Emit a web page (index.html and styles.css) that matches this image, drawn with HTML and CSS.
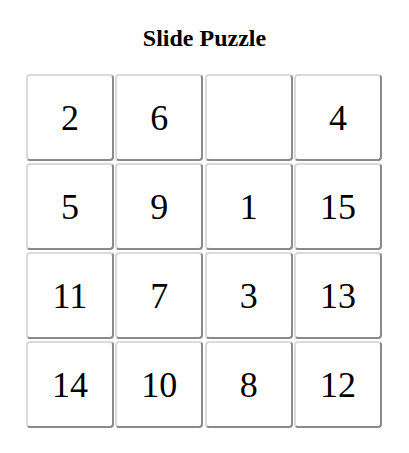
FILE: index.html
```html
<!DOCTYPE html>
<html>
<head>
<meta charset="utf-8">
<title>Slide Puzzle</title>
<link rel="stylesheet" href="styles.css">
</head>
<body>
<h2 class="title">Slide Puzzle</h2>
<div class="board">
  <div class="tile">2</div>
  <div class="tile">6</div>
  <div class="tile empty"></div>
  <div class="tile">4</div>
  <div class="tile">5</div>
  <div class="tile">9</div>
  <div class="tile">1</div>
  <div class="tile">15</div>
  <div class="tile">11</div>
  <div class="tile">7</div>
  <div class="tile">3</div>
  <div class="tile">13</div>
  <div class="tile">14</div>
  <div class="tile">10</div>
  <div class="tile">8</div>
  <div class="tile">12</div>
</div>
</body>
</html>
```

FILE: styles.css
```css
body {
  margin: 8px;
  font-family: "Liberation Serif", "Times New Roman", serif;
  background: #fff;
  color: #000;
}
.title {
  text-align: center;
  font-size: 24px;
  font-weight: bold;
  margin: 17px 0 22px;
}
.board {
  display: grid;
  grid-template-columns: repeat(4, 88px);
  grid-auto-rows: 87px;
  row-gap: 2px;
  column-gap: 1.4px;
  justify-content: center;
  padding-right: 1px;
}
.tile {
  box-sizing: border-box;
  display: flex;
  align-items: center;
  justify-content: center;
  background: #fff;
  border: 2px solid;
  border-color: #dadada #8a8a8a #8a8a8a #dadada;
  border-radius: 4px;
  font-size: 36px;
}
```
